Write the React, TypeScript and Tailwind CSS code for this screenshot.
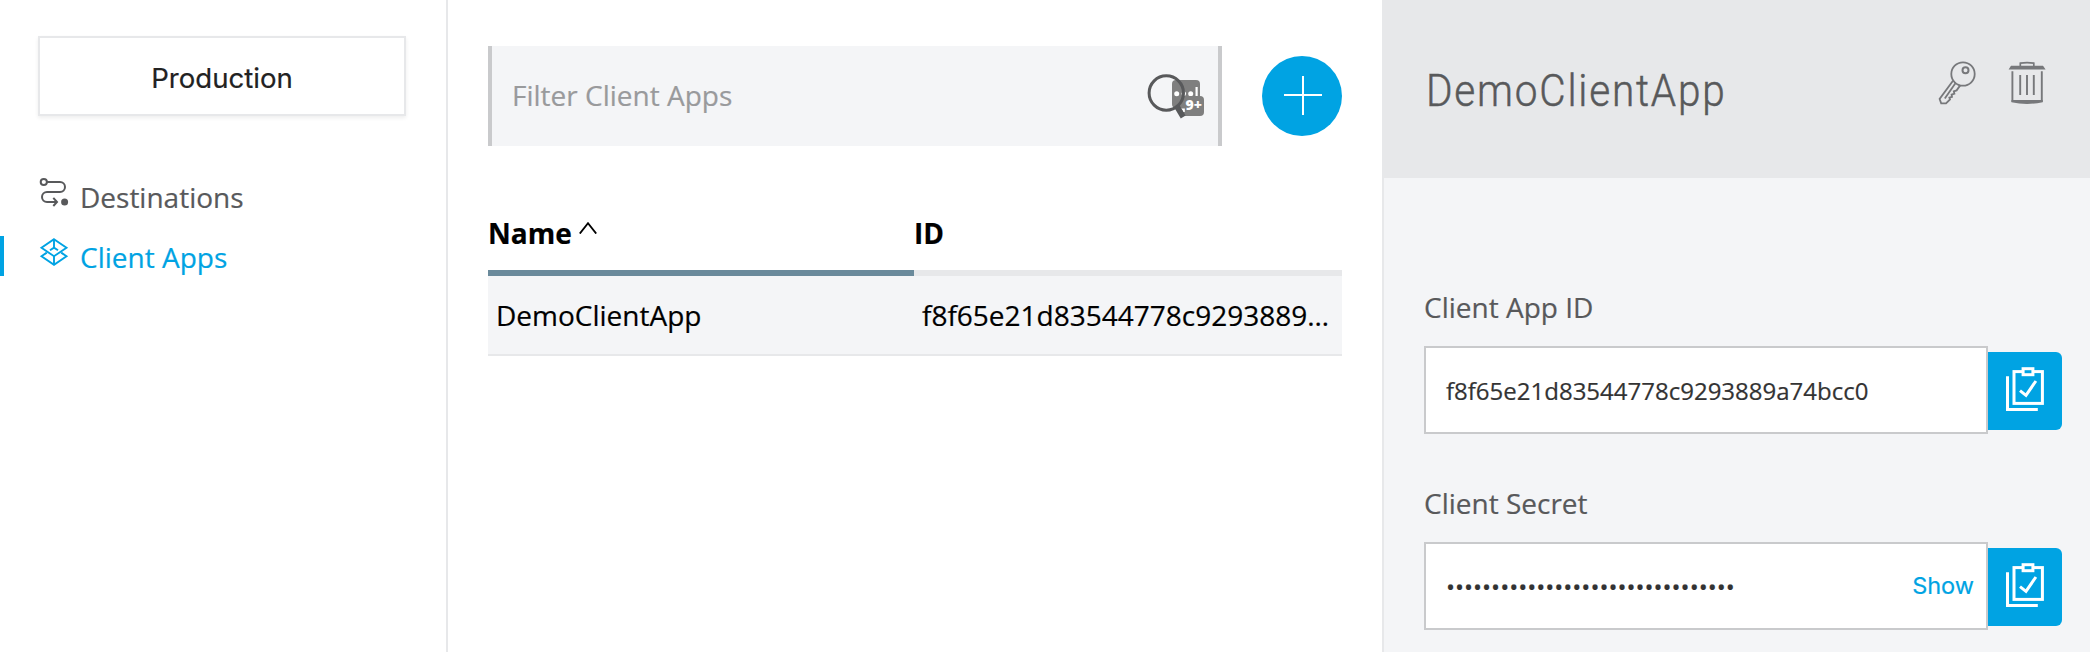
import React from "react";

const SANS = "font-['Open_Sans',sans-serif]";

function RouteIcon() {
  return (
    <svg className="h-8 w-8 shrink-0" viewBox="38 176 32 32" fill="none" stroke="currentColor" strokeWidth="2">
      <circle cx="43.8" cy="182" r="3.1" />
      <path d="M47 182H60a5 5 0 0 1 0 10H47a5 5 0 0 0 0 10H56.5" />
      <path d="M53.3 197.8L57 202L53.3 206" />
      <circle cx="64.6" cy="202" r="3.5" fill="currentColor" stroke="none" />
    </svg>
  );
}

function LayersIcon() {
  return (
    <svg className="h-8 w-8 shrink-0" viewBox="38 236 32 32" fill="none" stroke="currentColor" strokeWidth="1.9">
      <path d="M54 239.2L66.5 247.7L54 256.2L41.5 247.7Z" />
      <path d="M46.8 252.6L41.5 256.3L54 264.8L66.5 256.3L61.2 252.6" />
      <path d="M54 239V248M54 256V265M50 250.3L54 247.6L58 250.3" />
    </svg>
  );
}

function SearchIcon() {
  return (
    <svg className="h-12 w-[60px] shrink-0" viewBox="1146 70 60 48" fill="none">
      <rect x="1172" y="78" width="28" height="28" rx="4" fill="#7f7f7f" />
      <circle cx="1176.7" cy="91.8" r="2.5" fill="#fff" />
      <circle cx="1183.8" cy="91.8" r="2.3" fill="#fff" />
      <circle cx="1190.7" cy="91.8" r="2.5" fill="#fff" />
      <path d="M1196.6 85V94" stroke="#fff" strokeWidth="2.2" />
      <rect x="1180" y="94" width="24" height="20" rx="4" fill="#7f7f7f" />
      <path d="M1181 107.5H1183.8V110" stroke="#fff" strokeWidth="2" />
      <text x="1185.5" y="108" fontSize="14" fontWeight="800" fill="#fff" className={SANS}>
        9+
      </text>
      <circle cx="1166.3" cy="91" r="17.2" stroke="#58595b" strokeWidth="3" />
      <path d="M1176.8 104.3L1183.2 115" stroke="#58595b" strokeWidth="5.6" />
    </svg>
  );
}

function KeyIcon() {
  return (
    <svg className="h-12 w-10" viewBox="1937 58 40 48" fill="none" stroke="#77787b" strokeWidth="1.8">
      <circle cx="1963" cy="74" r="11.7" />
      <circle cx="1965.5" cy="70.3" r="3" strokeWidth="2" />
      <path d="M1953 80.8L1939.6 99L1941.2 103.4H1946L1950 99.4L1949.4 97.6L1952 96.8L1951.6 94.6L1954.4 93.6L1953.8 91.4L1956.6 90.4L1960.2 85.4" />
      <path d="M1955.6 83L1944.8 98.4" />
    </svg>
  );
}

function TrashIcon() {
  return (
    <svg className="h-12 w-10" viewBox="2007 58 40 48" fill="none" stroke="#77787b" strokeWidth="1.9">
      <path d="M2020.3 66V63.2Q2027 62.2 2033.8 63.2V66" strokeWidth="1.7" />
      <path d="M2011 65.8H2043L2045.6 69.6H2008.6Z" fill="#77787b" stroke="none" />
      <path d="M2012.4 71.2V102M2041.8 71.2V102M2020.2 75V95M2027 75V95M2033.8 75V95" />
      <path d="M2011.5 100H2042.7V102.2Q2027 105.6 2011.5 102.2Z" fill="#77787b" stroke="none" />
    </svg>
  );
}

function ClipboardIcon() {
  return (
    <svg className="h-12 w-10" viewBox="2005 365 40 48" fill="none" stroke="#fff" strokeWidth="3">
      <path d="M2007.5 376.3V409.5H2037.8" />
      <rect x="2014" y="371.6" width="28.4" height="31.8" />
      <rect x="2023.1" y="368.7" width="9.8" height="6" fill="#00a3e3" />
      <path d="M2020 390.6L2026 395.4L2035.9 381" />
    </svg>
  );
}

function Sidebar() {
  return (
    <aside className="flex w-[448px] shrink-0 flex-col border-r-2 border-[#e7e8ea] pt-9">
      <button className="mx-[38px] h-20 w-[368px] border-2 border-[#e7e8ea] bg-white pt-1 text-center font-['Inter',sans-serif] text-[27.6px] leading-9 text-[#222] shadow-[0_2px_4px_rgba(0,0,0,0.07)]">
        Production
      </button>
      <nav className="mt-[60px] flex flex-col gap-5 text-[28px] leading-[42px]">
        <a className="flex h-10 pl-[38px] text-[#58595b]">
          <RouteIcon />
          <span className="pl-[10px]">Destinations</span>
        </a>
        <a className="flex h-10 border-l-4 border-[#00a3e3] pl-[34px] text-[#00a3e3]">
          <LayersIcon />
          <span className="pl-[10px]">Client Apps</span>
        </a>
      </nav>
    </aside>
  );
}

function ClientAppList() {
  return (
    <main className="flex w-[934px] shrink-0 flex-col pr-10 pl-10 pt-[46px]">
      <div className="flex items-center gap-10">
        <div className="flex h-[100px] w-[734px] items-center justify-between border-x-4 border-[#c9cacc] bg-[#f4f5f7] pr-3 pl-5">
          <span className="pb-0.5 text-[28px] leading-[38px] text-[#999a9c]">Filter Client Apps</span>
          <SearchIcon />
        </div>
        <button className="flex h-20 w-20 items-center justify-center rounded-full bg-[#00a3e3]">
          <svg className="h-10 w-10" viewBox="0 0 40 40" stroke="#fff" strokeWidth="2">
            <path d="M2 19H40M21 0V39" />
          </svg>
        </button>
      </div>
      <div className="mt-[68px] grid w-[854px] grid-cols-[426px_428px] text-[28px] text-black">
        <div className="flex h-[62px] gap-[7px] border-b-6 border-[#6a8a9b] leading-[38px] font-bold">
          Name
          <svg className="mt-2 h-3 w-[18px]" viewBox="0 0 18 12" fill="none" stroke="#000" strokeWidth="1.8">
            <path d="M.8 11.6L9 1.2L17.2 11.6" />
          </svg>
        </div>
        <div className="h-[62px] border-b-6 border-[#e7e8ea] leading-[38px] font-bold">ID</div>
        <div className="h-20 border-b-2 border-[#e7e8ea] bg-[#f4f5f7] px-2 leading-[78px]">DemoClientApp</div>
        <div className="h-20 border-b-2 border-[#e7e8ea] bg-[#f4f5f7] px-2 leading-[78px]">
          f8f65e21d83544778c9293889…
        </div>
      </div>
    </main>
  );
}

function Field({ label, value, action }: { label: string; value: string; action?: string }) {
  return (
    <div className="flex flex-col">
      <label className="h-[58px] text-[28px] leading-[38px] text-[#58595b]">{label}</label>
      <div className="flex items-center">
        <div className="flex h-[88px] w-[564px] items-center justify-between border-2 border-[#c9cacc] bg-white pr-3 pl-5">
          <span className="pt-0.5 text-[24px] leading-9 text-[#333]">{value}</span>
          {action && (
            <span className="font-['Inter',sans-serif] text-[23.5px] leading-9 text-[#00a3e3]">{action}</span>
          )}
        </div>
        <button className="mt-0.5 flex h-[78px] w-[74px] items-center justify-center rounded-r-[6px] bg-[#00a3e3] pb-1">
          <ClipboardIcon />
        </button>
      </div>
    </div>
  );
}

function DetailPanel() {
  return (
    <section className="flex flex-1 flex-col border-l-2 border-[#e7e8ea] bg-[#f4f5f7]">
      <header className="flex h-[178px] justify-between bg-[#e7e8ea] pr-[43px] pl-[42px]">
        <h1 className="origin-left scale-x-90 pt-[63px] font-['Roboto',sans-serif] text-[45px] leading-[56px] font-light tracking-[2px] text-[#58595b] [-webkit-text-stroke:0.5px_#58595b]">
          DemoClientApp
        </h1>
        <div className="flex gap-[30px] pt-[58px]">
          <KeyIcon />
          <TrashIcon />
        </div>
      </header>
      <div className="flex flex-col gap-[50px] pt-[110px] pl-10">
        <Field label="Client App ID" value="f8f65e21d83544778c9293889a74bcc0" />
        <Field label="Client Secret" value={"•".repeat(32)} action="Show" />
      </div>
    </section>
  );
}

export default function App() {
  return (
    <div className="flex h-[652px] w-[2090px] overflow-hidden bg-white font-['Open_Sans',sans-serif] [-webkit-text-stroke:0.2px_currentColor]">
      <Sidebar />
      <ClientAppList />
      <DetailPanel />
    </div>
  );
}
